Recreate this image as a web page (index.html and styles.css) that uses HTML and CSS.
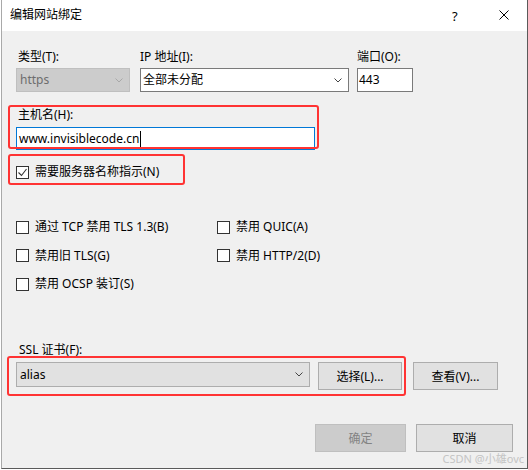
FILE: index.html
```html
<!DOCTYPE html>
<html lang="zh-CN">
<head>
    <meta charset="UTF-8">
    <meta name="viewport" content="width=device-width, initial-scale=1.0">
    <title>编辑网站绑定</title>
    <link rel="stylesheet" href="styles.css">
</head>
<body>
    <div class="window">
        <div class="titlebar">
            <span class="title">编辑网站绑定</span>
            <span class="help">?</span>
            <svg class="close" width="10" height="10" viewBox="0 0 10 10">
                <path d="M0.5 0.5 L9.5 9.5 M9.5 0.5 L0.5 9.5" stroke="#000" stroke-width="1" fill="none"/>
            </svg>
        </div>

        <div class="content">
            <div class="top-row">
                <div class="field f-type">
                    <label>类型(T):</label>
                    <div class="select disabled">
                        <span>https</span>
                        <svg class="arrow" width="8" height="5" viewBox="0 0 8 5"><path d="M0.5 0.5 L4 4 L7.5 0.5" stroke="#a8a8a8" fill="none"/></svg>
                    </div>
                </div>
                <div class="field f-ip">
                    <label>IP 地址(I):</label>
                    <div class="select">
                        <span>全部未分配</span>
                        <svg class="arrow" width="8" height="5" viewBox="0 0 8 5"><path d="M0.5 0.5 L4 4 L7.5 0.5" stroke="#444" fill="none"/></svg>
                    </div>
                </div>
                <div class="field f-port">
                    <label>端口(O):</label>
                    <div class="textbox">443</div>
                </div>
            </div>

            <div class="field host">
                <label>主机名(H):</label>
                <div class="textbox focus">www.invisiblecode.cn<span class="caret"></span></div>
            </div>

            <div class="check sni">
                <span class="box">
                    <svg width="11" height="11" viewBox="0 0 11 11"><path d="M1.5 5.5 L4.5 8.5 L9.5 2" stroke="#333" stroke-width="1.1" fill="none"/></svg>
                </span>
                需要服务器名称指示(N)
            </div>

            <div class="options">
                <div class="check"><span class="box"></span>通过 TCP 禁用 TLS 1.3(B)</div>
                <div class="check"><span class="box"></span>禁用 QUIC(A)</div>
                <div class="check"><span class="box"></span>禁用旧 TLS(G)</div>
                <div class="check"><span class="box"></span>禁用 HTTP/2(D)</div>
                <div class="check"><span class="box"></span>禁用 OCSP 装订(S)</div>
            </div>

            <div class="ssl">
                <label>SSL 证书(F):</label>
                <div class="ssl-row">
                    <div class="select cert">
                        <span>alias</span>
                        <svg class="arrow" width="8" height="5" viewBox="0 0 8 5"><path d="M0.5 0.5 L4 4 L7.5 0.5" stroke="#444" fill="none"/></svg>
                    </div>
                    <button class="btn btn-pick">选择(L)...</button>
                    <button class="btn btn-view">查看(V)...</button>
                </div>
            </div>

            <div class="actions">
                <button class="btn btn-ok" disabled>确定</button>
                <button class="btn btn-cancel">取消</button>
            </div>
        </div>

        <!-- red annotation boxes drawn over the dialog -->
        <div class="mark m-host"></div>
        <div class="mark m-sni"></div>
        <div class="mark m-ssl"></div>
        <span class="watermark">CSDN @小雄ovc</span>
    </div>
</body>
</html>
```

FILE: styles.css
```css
body {
    margin: 0;
    background: #fff;
    font-family: "Noto Sans", "Noto Sans CJK SC", sans-serif;
    font-size: 12px;
    line-height: 16px;
    color: #000;
}
.window {
    position: relative;
    margin-left: 1px;
    width: 525px;
    height: 468px;
    border-left: 1px solid #a9a9a9;
    border-right: 1px solid #5a5a5a;
    border-bottom: 1px solid #5a5a5a;
    background: #f0f0f0;
}
.titlebar {
    height: 31px;
    background: #fff;
    display: flex;
    align-items: center;
    padding-left: 8px;
}
.title {
    flex: 1;
    margin-top: -1px;
}
.help {
    width: 10px;
    margin-right: 37px;
    font-size: 13px;
}
.close {
    margin-right: 18px;
    margin-top: -2px;
}
.content {
    padding: 18px 14px 0 14px;
}
label {
    display: block;
    margin-bottom: 3px;
}
.top-row {
    display: flex;
}
.f-type {
    width: 114px;
    margin-right: 10px;
}
.f-type label {
    padding-left: 2px;
}
.f-ip {
    width: 209px;
    margin-right: 8px;
}
.f-port {
    width: 56px;
}
.select {
    height: 24px;
    box-sizing: border-box;
    border: 1px solid #7a7a7a;
    background: #fff;
    display: flex;
    align-items: center;
    justify-content: space-between;
    padding: 0 6px 0 2px;
}
.select.disabled {
    background: #cccccc;
    border-color: #bfbfbf;
    color: #6d6d6d;
    padding-left: 3px;
}
.textbox {
    height: 24px;
    box-sizing: border-box;
    border: 1px solid #7a7a7a;
    background: #fff;
    padding-left: 1px;
    display: flex;
    align-items: center;
}
.host {
    margin-top: 15px;
}
.host label {
    padding-left: 2px;
    margin-bottom: 4px;
}
.host .textbox {
    width: 299px;
    height: 23px;
    border-color: #0078d7;
    padding-left: 2px;
}
.caret {
    display: inline-block;
    width: 1px;
    height: 16px;
    background: #000;
    margin-left: 1px;
}
.check {
    display: flex;
    align-items: center;
    height: 16px;
}
.box {
    width: 13px;
    height: 13px;
    box-sizing: border-box;
    border: 1px solid #333;
    background: #fff;
    margin-right: 6px;
    display: flex;
    align-items: center;
    justify-content: center;
}
.sni {
    margin-top: 14px;
}
.options {
    margin-top: 39px;
    display: grid;
    grid-template-columns: 201px 1fr;
    row-gap: 12.5px;
}
.ssl {
    margin-top: 50px;
}
.ssl label {
    padding-left: 3px;
    margin-bottom: 4px;
}
.ssl-row {
    display: flex;
    align-items: flex-start;
}
.cert {
    width: 294px;
    height: 25px;
    background: #e1e1e1;
    border-color: #adadad;
    padding-left: 3px;
}
.btn {
    font-family: inherit;
    font-size: 12px;
    color: #000;
    height: 28px;
    box-sizing: border-box;
    border: 1px solid #adadad;
    background: #e1e1e1;
    padding: 0;
}
.btn-pick {
    width: 84px;
    margin-left: 8px;
}
.btn-view {
    width: 85px;
    margin-left: 11px;
}
.actions {
    margin-top: 34px;
    display: flex;
    justify-content: flex-end;
}
.btn-ok {
    width: 91px;
    margin-right: 10px;
    background: #cccccc;
    border-color: #bfbfbf;
    color: #838383;
}
.btn-cancel {
    width: 97px;
}
.mark {
    position: absolute;
    border: 2px solid #ff3333;
    border-radius: 3px;
    box-sizing: border-box;
}
.m-host {
    left: 6px;
    top: 105px;
    width: 311px;
    height: 44px;
}
.m-sni {
    left: 6px;
    top: 154px;
    width: 177px;
    height: 31px;
}
.m-ssl {
    left: 5px;
    top: 356px;
    width: 399px;
    height: 40px;
}
.watermark {
    position: absolute;
    right: 3px;
    top: 451px;
    font-size: 11px;
    color: #c4c4c4;
}
```
